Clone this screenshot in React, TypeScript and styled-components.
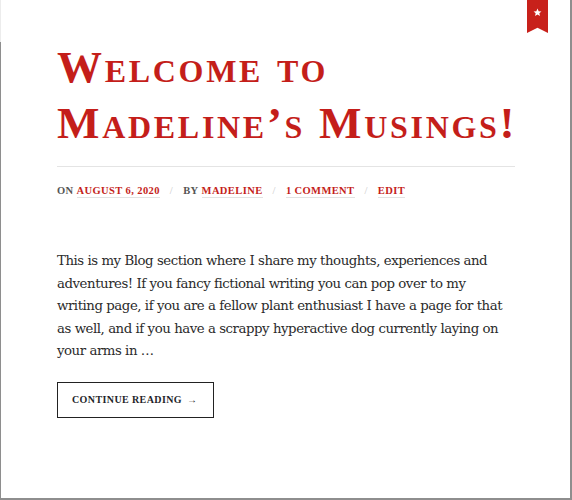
import React from "react";
import styled, { createGlobalStyle } from "styled-components";

const Global = createGlobalStyle`
  html, body { margin: 0; padding: 0; background: #fff; }
  * { box-sizing: border-box; }
`;

const Frame = styled.div`
  position: relative;
  width: 572px;
  height: 500px;
  background:
    linear-gradient(to bottom, #ececec 0 42px, #8e8e8e 42px) left top / 1px 100% no-repeat,
    #fff;
  border-right: 2px solid #8e8e8e;
  border-bottom: 2px solid #8e8e8e;
  overflow: hidden;
`;

const Ribbon = styled.div`
  position: absolute;
  top: 0;
  right: 22px;
  width: 21px;
  height: 33px;
  background: #c8211b;
  clip-path: polygon(0 0, 100% 0, 100% 100%, 50% 84%, 0 100%);
  display: flex;
  justify-content: center;
  padding-top: 8px;
`;

const Article = styled.article`
  padding: 39px 30px 0 57px;
  width: 572px;
`;

const Title = styled.h1`
  margin: 0;
  font-family: "Liberation Serif", "DejaVu Serif", serif;
  font-variant: small-caps;
  font-weight: 700;
  font-size: 45px;
  line-height: 56px;
  letter-spacing: 2.7px;
  color: #c41e1a;
  width: 475px;
`;

const Rule = styled.hr`
  margin: 15px 0 0 0;
  border: 0;
  border-top: 1px solid #e4e4e4;
  width: 458px;
`;

const Meta = styled.div`
  display: flex;
  align-items: baseline;
  margin-top: 18px;
  font-family: "Liberation Serif", "DejaVu Serif", serif;
  font-size: 10.5px;
  font-weight: 700;
  letter-spacing: 0.4px;
  text-transform: uppercase;
  color: #555;
`;

const MetaItem = styled.span`
  display: inline-flex;
  gap: 3px;
`;

const MetaLink = styled.a`
  color: #c41e1a;
  text-decoration: none;
  border-bottom: 1px solid #e2e2e2;
  padding-bottom: 1px;
`;

const Sep = styled.span`
  color: #c8c8c8;
  font-weight: 400;
  margin: 0 10px;
`;

const Excerpt = styled.p`
  margin: 52px 0 0 0;
  font-family: "DejaVu Serif", "Liberation Serif", serif;
  font-size: 13.3px;
  letter-spacing: -0.45px;
  line-height: 22.5px;
  color: #2b2b2b;
  width: 485px;
`;

const Button = styled.a`
  display: inline-flex;
  align-items: center;
  gap: 5px;
  margin-top: 19px;
  height: 36px;
  padding: 0 16px 0 14px;
  border: 1px solid #222;
  font-family: "Liberation Serif", "DejaVu Serif", serif;
  font-size: 10px;
  font-weight: 700;
  letter-spacing: 0.4px;
  text-transform: uppercase;
  color: #1f1f2a;
  text-decoration: none;
`;

const Arrow = styled.span`
  font-size: 10px;
  font-weight: 400;
`;

export default function App() {
  return (
    <>
      <Global />
      <Frame>
        <Ribbon>
          <svg width="9" height="9" viewBox="0 0 24 24">
            <path
              fill="#fff"
              d="M12 1.5l3.1 6.9 7.4.7-5.6 5 1.7 7.4L12 17.6 5.4 21.5l1.7-7.4-5.6-5 7.4-.7z"
            />
          </svg>
        </Ribbon>
        <Article>
          <Title>Welcome to Madeline’s Musings!</Title>
          <Rule />
          <Meta>
            <MetaItem>
              On <MetaLink href="#">August 6, 2020</MetaLink>
            </MetaItem>
            <Sep>/</Sep>
            <MetaItem>
              By <MetaLink href="#">Madeline</MetaLink>
            </MetaItem>
            <Sep>/</Sep>
            <MetaLink href="#">1 Comment</MetaLink>
            <Sep>/</Sep>
            <MetaLink href="#">Edit</MetaLink>
          </Meta>
          <Excerpt>
            This is my Blog section where I share my thoughts, experiences and
            <br />
            adventures! If you fancy fictional writing you can pop over to my
            <br />
            writing page, if you are a fellow plant enthusiast I have a page for
            that
            <br />
            as well, and if you have a scrappy hyperactive dog currently laying on
            <br />
            your arms in …
          </Excerpt>
          <Button href="#">
            Continue Reading <Arrow>→</Arrow>
          </Button>
        </Article>
      </Frame>
    </>
  );
}
